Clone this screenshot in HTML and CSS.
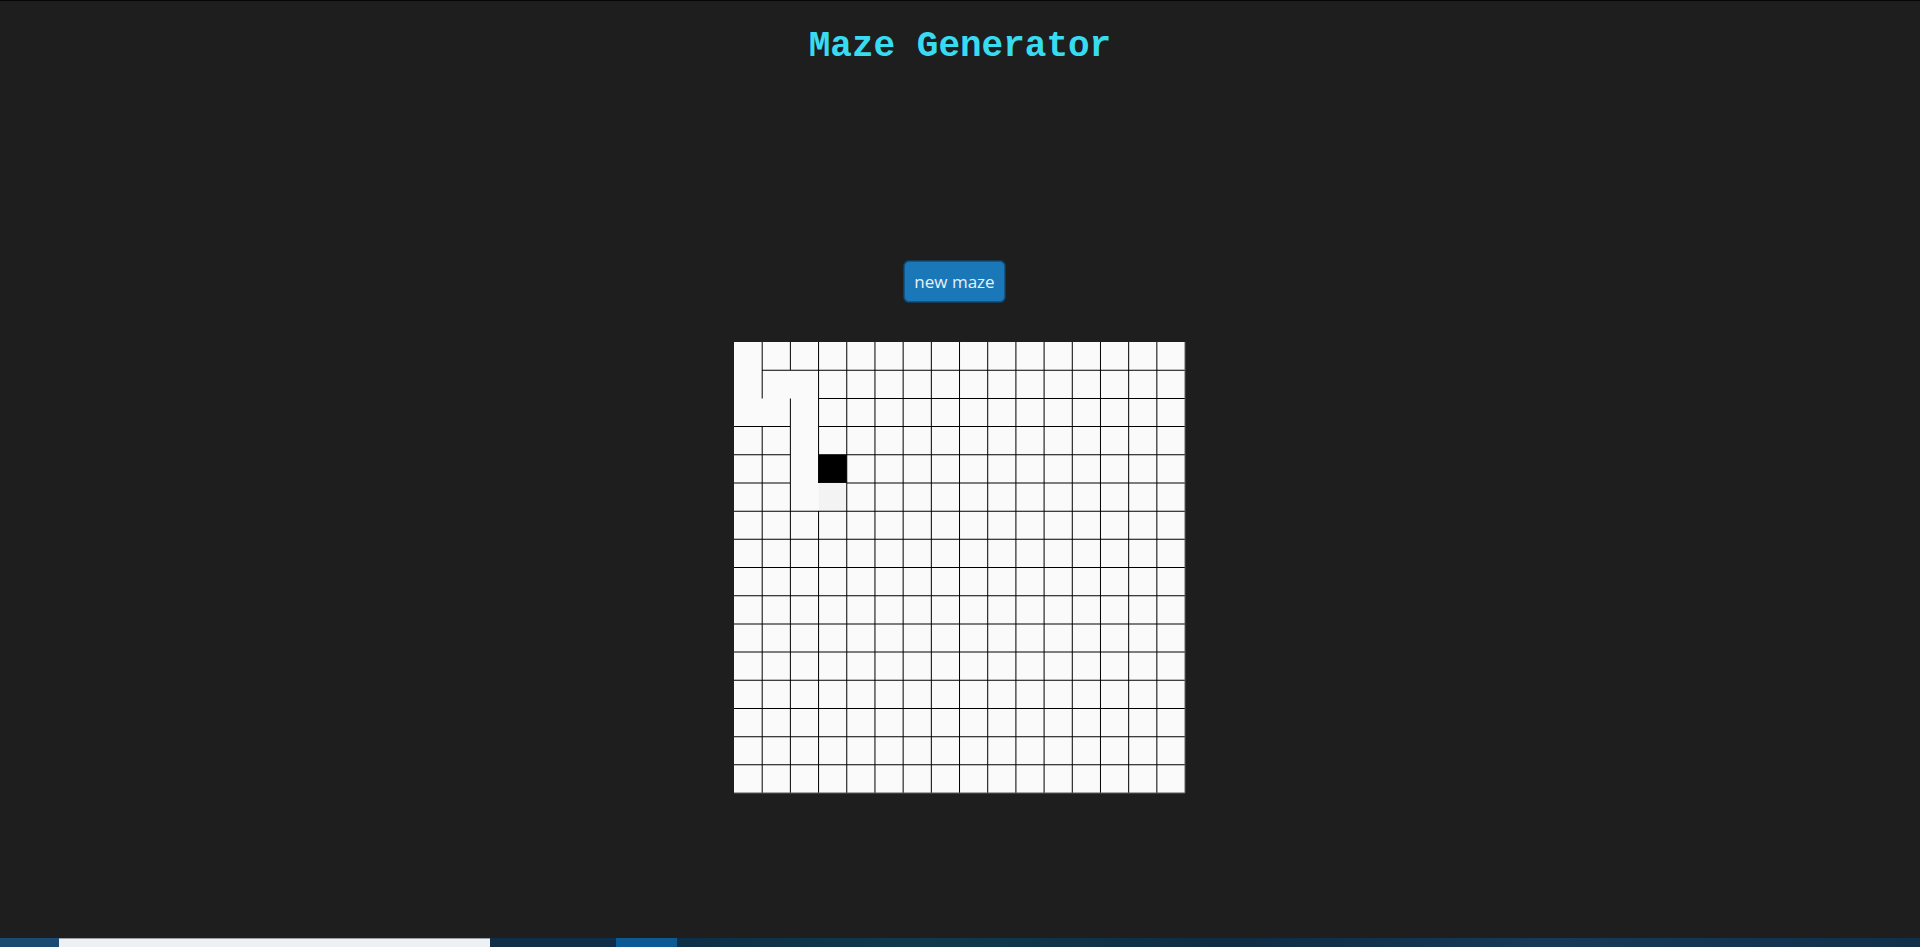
FILE: index.html
```html
<!DOCTYPE html>
<html>
<head>
<meta charset="utf-8">
<title>Maze Generator</title>
<link rel="stylesheet" href="styles.css">
</head>
<body>
<div class="topline"></div>
<main class="page">
  <h1 class="title">Maze Generator</h1>
  <div class="controls">
    <button class="btn">new maze</button>
  </div>
  <div class="maze">
    <svg width="452" height="452" viewBox="0 0 452 452" xmlns="http://www.w3.org/2000/svg">
      <g transform="scale(28.19)">
        <rect x="0" y="0" width="16" height="16" fill="#fafafa"/>
        <rect x="3" y="5" width="1" height="1" fill="#f3f3f3"/>
        <rect x="3" y="4" width="1" height="1" fill="#000"/>
        <path fill="none" stroke="#000" stroke-width="0.0355" d="
          M1 1H16 M3 2H16 M0 3H2 M3 3H16 M0 4H2 M3 4H16 M0 5H2 M4 5H16
          M0 6H16 M0 7H16 M0 8H16 M0 9H16 M0 10H16 M0 11H16 M0 12H16 M0 13H16 M0 14H16 M0 15H16
          M1 0V2 M1 3V16 M2 0V1 M2 2V16 M3 0V5 M3 6V16
          M4 0V16 M5 0V16 M6 0V16 M7 0V16 M8 0V16 M9 0V16 M10 0V16 M11 0V16 M12 0V16 M13 0V16 M14 0V16 M15 0V16"/>
        <path fill="none" stroke="#555" stroke-width="0.0355" d="M16 0V16 M0 16H16"/>
      </g>
    </svg>
  </div>
</main>
<div class="taskbar">
  <span class="seg seg-a"></span>
  <span class="seg seg-b"></span>
  <span class="seg seg-c"></span>
  <span class="seg seg-d"></span>
  <span class="seg seg-e"></span>
</div>
</body>
</html>
```

FILE: styles.css
```css
html, body {
  margin: 0;
  padding: 0;
  height: 100%;
}
body {
  background: #1e1e1e;
  display: flex;
  flex-direction: column;
  min-height: 100vh;
  overflow: hidden;
  font-family: "Open Sans", "DejaVu Sans", sans-serif;
}
.topline {
  height: 1px;
  background: #050505;
  flex: none;
}
.page {
  flex: 1;
  display: flex;
  flex-direction: column;
  align-items: center;
}
.title {
  margin: 26px 0 0 0;
  font-family: "Liberation Mono", "Courier New", monospace;
  font-weight: bold;
  font-size: 36px;
  line-height: 40px;
  color: #38dcf0;
}
.controls {
  margin-top: 194px;
  padding-right: 11px;
}
.btn {
  width: 101px;
  height: 41px;
  background: #1a78b8;
  color: #e8f0f8;
  border: 1px solid #10568a;
  border-radius: 5px;
  font-family: "Open Sans", "DejaVu Sans", sans-serif;
  font-size: 17px;
  padding: 0;
  box-shadow: 0 0 0 1px #163a56;
}
.maze {
  margin-top: 40px;
  width: 452px;
  height: 452px;
  line-height: 0;
}
.maze svg {
  display: block;
}
.taskbar {
  flex: none;
  height: 9px;
  display: flex;
}
.seg { display: block; height: 100%; }
.seg-a { width: 59px; background: #1c4a70; }
.seg-b { width: 431px; background: #eef1f4; border-top: 1px solid #9aa0a6; box-sizing: border-box; }
.seg-c { width: 126px; background: #0f2e48; }
.seg-d { width: 61px; background: #0b5a94; }
.seg-e { flex: 1; background: linear-gradient(90deg, #0d2f47 0%, #103a4c 20%, #0e2c44 45%, #163a58 70%, #10304a 100%); }
```
